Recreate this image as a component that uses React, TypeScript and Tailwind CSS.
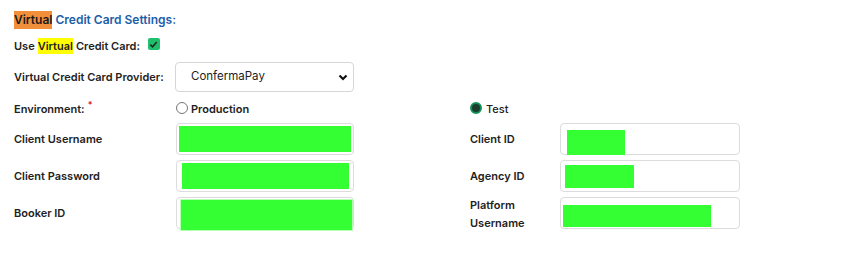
import React from "react";

function Field({ fillClass }: { fillClass: string }) {
  return (
    <div className="h-[32px] w-full rounded-[4px] border border-[#dcdcdc] bg-white flex items-center">
      <div className={fillClass} />
    </div>
  );
}

export default function App() {
  return (
    <div
      className="w-[860px] h-[259px] bg-white pl-[14px] pt-[11px] text-[#222] text-[11px] whitespace-nowrap"
      style={{ fontFamily: "Inter, 'Liberation Sans', Arial, sans-serif" }}
    >
      <div className="h-[17px] flex items-center text-[12px] font-semibold text-[#1b5ea8]">
        <span className="bg-[#f28f3b] text-[#1a1a1a]">Virtual</span>
        <span>&nbsp;Credit Card Settings:</span>
      </div>

      <div className="mt-[8px] h-[20px] flex items-center font-semibold">
        <span>Use </span>
        <span className="bg-[#ffff00] mx-[3px]">Virtual</span>
        <span>Credit Card:</span>
        <span className="ml-[8px] w-[12px] h-[12px] rounded-[2px] bg-[#1fbf6c] flex items-center justify-center -mt-[4px]">
          <svg width="9" height="9" viewBox="0 0 10 10">
            <path d="M1.5 5.2 L4 7.6 L8.6 2.2" fill="none" stroke="#1d2b24" strokeWidth="1.8" />
          </svg>
        </span>
      </div>

      <div className="mt-[6px] flex items-center">
        <div className="w-[161px] font-semibold">Virtual Credit Card Provider:</div>
        <div className="w-[179px] h-[30px] rounded-[4px] border border-[#d6d6d6] flex items-center justify-between pl-[15px] pr-[5px] text-[11.5px]">
          <span>ConfermaPay</span>
          <svg width="10" height="7" viewBox="0 0 10 7">
            <path d="M1.5 1.5 L5 5 L8.5 1.5" fill="none" stroke="#111" strokeWidth="2.2" />
          </svg>
        </div>
      </div>

      <div className="mt-[7px] h-[20px] flex items-center">
        <div className="w-[162px] font-semibold flex">
          Environment:
          <span className="text-[#e02020] text-[9px] ml-[3px] -mt-[3px]">*</span>
        </div>
        <div className="w-[294px] flex items-center font-semibold">
          <span className="w-[12px] h-[12px] rounded-full border border-[#777] bg-white -mt-[3px]" />
          <span className="ml-[3px]">Production</span>
        </div>
        <div className="flex items-center">
          <span className="w-[12px] h-[12px] rounded-full border-[2px] border-[#11905a] bg-[#1c3d2c] -mt-[3px]" />
          <span className="ml-[4px] font-medium">Test</span>
        </div>
      </div>

      <div className="mt-[4px] flex flex-col gap-[5px]">
        <div className="h-[32px] flex items-center">
          <div className="w-[162px] font-semibold">Client Username</div>
          <div className="w-[178px]">
            <Field fillClass="ml-[2px] w-[172px] h-[26px] bg-[#33ff33]" />
          </div>
          <div className="w-[116px]" />
          <div className="w-[90px] font-semibold">Client ID</div>
          <div className="w-[180px]">
            <Field fillClass="ml-[6px] mt-[6px] w-[58px] h-[25px] bg-[#33ff33]" />
          </div>
        </div>
        <div className="h-[32px] flex items-center">
          <div className="w-[162px] font-semibold">Client Password</div>
          <div className="w-[178px]">
            <Field fillClass="ml-[5px] w-[167px] h-[26px] bg-[#33ff33]" />
          </div>
          <div className="w-[116px]" />
          <div className="w-[90px] font-semibold">Agency ID</div>
          <div className="w-[180px]">
            <Field fillClass="ml-[4px] w-[69px] h-[23px] bg-[#33ff33]" />
          </div>
        </div>
        <div className="h-[32px] flex items-center">
          <div className="w-[162px] font-semibold">Booker ID</div>
          <div className="w-[178px]">
            <div className="h-[32px] w-full rounded-[4px] border border-[#dcdcdc] bg-white flex items-start">
              <div className="ml-[3px] mt-[1px] w-[177px] h-[32px] bg-[#33ff33] border border-[#b8ffb8]" />
            </div>
          </div>
          <div className="w-[116px]" />
          <div className="w-[90px] font-semibold leading-[18px] mt-[2px]">
            Platform
            <br />
            Username
          </div>
          <div className="w-[180px]">
            <Field fillClass="ml-[2px] mt-[6px] w-[148px] h-[22px] bg-[#33ff33]" />
          </div>
        </div>
      </div>
    </div>
  );
}
